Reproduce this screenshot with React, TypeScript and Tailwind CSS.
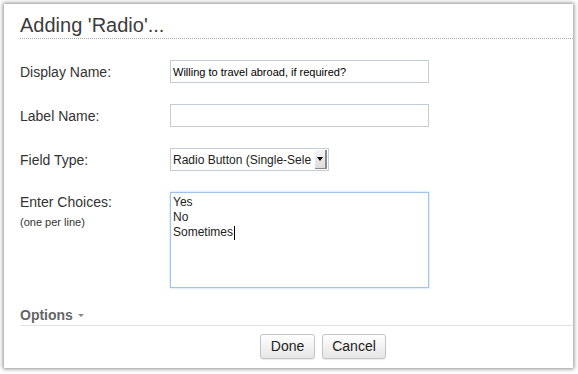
import React from 'react';

const labelCls = 'w-[150px] shrink-0 text-[14px] leading-4 text-[#333]';
const inputCls =
  'h-[23px] w-[259px] border border-[#c3ccd8] bg-white px-[2px] text-[11px] text-black outline-none';

const Row: React.FC<{ label: string; children: React.ReactNode }> = ({ label, children }) => (
  <div className="flex items-center">
    <div className={labelCls}>{label}</div>
    {children}
  </div>
);

const App: React.FC = () => {
  return (
    <div className="h-[374px] w-[578px] bg-white p-[4px] font-['Liberation_Sans',Arial,sans-serif]">
      <div className="flex h-[364px] w-[569px] flex-col bg-white pl-[16px] shadow-[0_0_4px_1px_rgba(0,0,0,0.45)]">
        {/* Title */}
        <div className="mt-[9px] border-b border-dotted border-[#aaa] pb-[1px]">
          <h1 className="text-[20px] leading-6 text-[#3c3c3c]">Adding 'Radio'...</h1>
        </div>

        <div className="mt-[21px] flex flex-col gap-[21px]">
          <Row label="Display Name:">
            <input className={inputCls} defaultValue="Willing to travel abroad, if required?" />
          </Row>
          <Row label="Label Name:">
            <input className={inputCls} defaultValue="" />
          </Row>
          <Row label="Field Type:">
            <div className="flex h-[23px] w-[159px] items-center border border-[#c3ccd8] bg-white pl-[2px] pr-[1px]">
              <span className="flex-1 whitespace-nowrap text-[12px] leading-4 text-[#222]">
                Radio Button (Single-Sele
              </span>
              <span className="flex h-[19px] w-[12px] shrink-0 items-center justify-center border-b border-r-2 border-[#8a8a8a] bg-gradient-to-b from-[#f6f6f6] to-[#dcdcdc]">
                <span className="block h-0 w-0 border-x-[3px] border-t-[4px] border-x-transparent border-t-black" />
              </span>
            </div>
          </Row>
          <div className="flex items-start">
            <div className="w-[150px] shrink-0 pt-[2px]">
              <div className="text-[14px] leading-4 text-[#333]">Enter Choices:</div>
              <div className="mt-[5px] text-[11px] leading-[14px] text-[#333]">(one per line)</div>
            </div>
            <div className="h-[96px] w-[259px] border border-[#9fc3ec] bg-white px-[2px] pt-[2px] text-[12px] leading-[15px] text-[#222] shadow-[0_0_2px_rgba(90,150,230,0.45)]">
              <div>Yes</div>
              <div>No</div>
              <div className="flex items-center">
                Sometimes<span className="ml-[1px] inline-block h-[14px] w-px bg-black" />
              </div>
            </div>
          </div>
        </div>

        {/* Options */}
        <div className="mt-[19px] flex items-center border-b border-[#e3e3e3] pb-[2px]">
          <span className="text-[14px] font-bold leading-4 text-[#666]">Options</span>
          <span className="ml-[5px] mt-[1px] block h-0 w-0 border-x-[3px] border-t-[3px] border-x-transparent border-t-[#888]" />
        </div>

        {/* Buttons */}
        <div className="mt-[8px] flex gap-[7px] pl-[240px]">
          <button className="h-[25px] w-[55px] rounded-[3px] border border-[#c4c4c4] bg-gradient-to-b from-white to-[#e6e6e6] text-[14px] text-[#222] shadow-[0_1px_1px_rgba(0,0,0,0.08)]">
            Done
          </button>
          <button className="h-[25px] w-[64px] rounded-[3px] border border-[#c4c4c4] bg-gradient-to-b from-white to-[#e6e6e6] text-[14px] text-[#222] shadow-[0_1px_1px_rgba(0,0,0,0.08)]">
            Cancel
          </button>
        </div>
      </div>
    </div>
  );
};

export default App;
